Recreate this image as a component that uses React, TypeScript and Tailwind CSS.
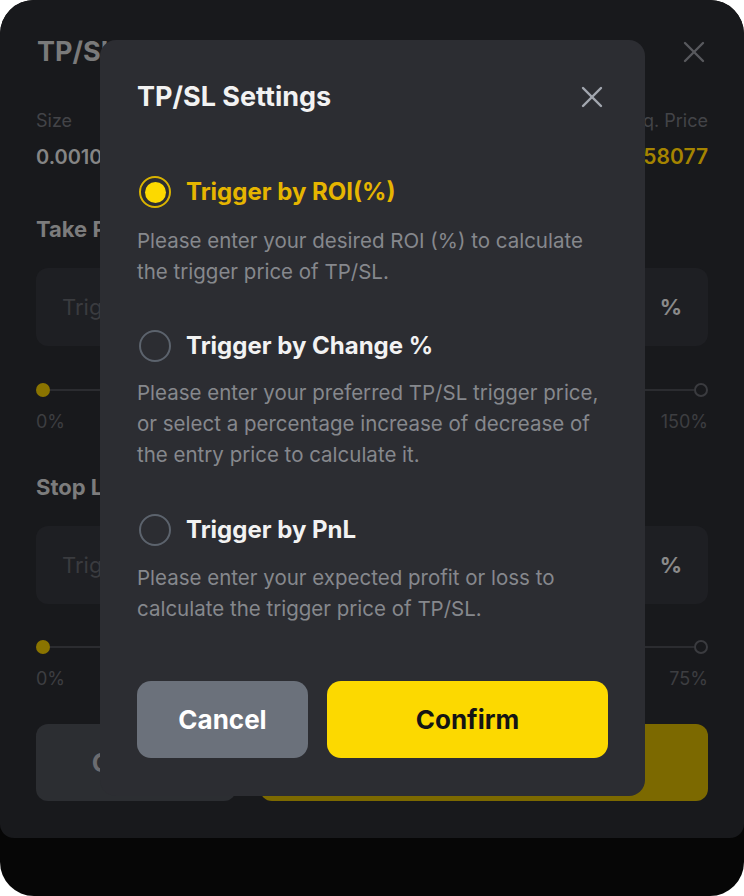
import { X } from 'lucide-react';

const font = { fontFamily: 'Inter, "Noto Sans", sans-serif' };

function Slider({ max }: { max: string }) {
  return (
    <div>
      <div className="flex items-center h-[14px]">
        <div className="w-[14px] h-[14px] rounded-full bg-[#8a7400]" />
        <div className="flex-1 h-[2px] bg-[#2b2c30]" />
        <div className="w-[14px] h-[14px] rounded-full border-2 border-[#3a3b3f]" />
      </div>
      <div className="flex justify-between mt-[15px] text-[18px] leading-[20px] text-[#3d3e41]">
        <span>0%</span>
        <span>{max}</span>
      </div>
    </div>
  );
}

function PriceInput() {
  return (
    <div className="h-[78px] rounded-[12px] bg-[#1e1f23] flex items-center justify-between pl-[26px] pr-[26px]">
      <span className="text-[22px] text-[#3a3b3f]">Trig</span>
      <span className="text-[22px] font-bold text-[#8a8a8a]">%</span>
    </div>
  );
}

function Option({
  selected,
  label,
  desc,
  className,
  descClass,
}: {
  selected?: boolean;
  label: string;
  desc: string;
  className: string;
  descClass: string;
}) {
  return (
    <div className={className}>
      <div className="flex items-center h-[32px] gap-[15px]">
        {selected ? (
          <div className="ml-[2px] w-[32px] h-[32px] rounded-full border-2 border-[#d9b300] flex items-center justify-center">
            <div className="w-[21px] h-[21px] rounded-full bg-[#fcd900]" />
          </div>
        ) : (
          <div className="ml-[2px] w-[32px] h-[32px] rounded-full border-2 border-[#5c636d]" />
        )}
        <span
          className={`text-[24px] font-bold ${selected ? 'text-[#e6b500]' : 'text-[#f2f2f2]'}`}
        >
          {label}
        </span>
      </div>
      <p className={`${descClass} text-[20.5px] leading-[31px] text-[#86888d]`}>{desc}</p>
    </div>
  );
}

export default function App() {
  return (
    <div className="w-[744px] h-[896px] bg-white" style={font}>
      <div className="relative w-full h-full rounded-[34px] bg-[#060606] overflow-hidden">
        {/* dimmed sheet behind the dialog */}
        <div className="h-[838px] bg-[#18191c] rounded-b-[14px] px-[36px] pt-[30px]">
          <div className="flex items-center justify-between h-[44px]">
            <span className="text-[27px] font-bold text-[#7a7a7a] pl-px">TP/SL</span>
            <X className="w-[36px] h-[36px] text-[#58595d] -mr-[4px]" strokeWidth={1.6} />
          </div>
          <div className="mt-[37px] flex justify-between">
            <div>
              <div className="text-[18px] leading-[20px] text-[#434448]">Size</div>
              <div className="mt-[14px] text-[20px] leading-[24px] font-semibold text-[#858585]">
                0.0010 BTC
              </div>
            </div>
            <div className="text-right">
              <div className="text-[18px] leading-[20px] text-[#434448]">Est. Liq. Price</div>
              <div className="mt-[14px] text-[21px] leading-[24px] font-semibold text-[#a58400]">
                58077
              </div>
            </div>
          </div>
          <div className="mt-[46px] text-[22px] leading-[28px] font-bold text-[#7c7c7c]">
            Take Profit
          </div>
          <div className="mt-[25px]">
            <PriceInput />
          </div>
          <div className="mt-[37px]">
            <Slider max="150%" />
          </div>
          <div className="mt-[41px] text-[22px] leading-[28px] font-bold text-[#7c7c7c]">
            Stop Loss
          </div>
          <div className="mt-[25px]">
            <PriceInput />
          </div>
          <div className="mt-[36px]">
            <Slider max="75%" />
          </div>
          <div className="mt-[35px] flex gap-[24px] h-[77px]">
            <div className="w-[200px] rounded-[12px] bg-[#2c2e32] flex items-center justify-center text-[26px] font-bold text-[#6b6c70]">
              Cancel
            </div>
            <div className="flex-1 rounded-[12px] bg-[#7c6900]" />
          </div>
        </div>

        {/* dialog */}
        <div className="absolute left-[100px] top-[40px] w-[545px] h-[756px] rounded-[16px] bg-[#2c2d32] pl-[37px] pr-[37px] pt-[41px]">
          <div className="flex items-center justify-between h-[32px]">
            <span className="text-[27px] font-bold text-[#f2f2f2]">TP/SL Settings</span>
            <X className="w-[36px] h-[36px] text-[#a3a7b0] -mr-[2px]" strokeWidth={1.6} />
          </div>
          <Option
            className="mt-[63px]"
            descClass="mt-[17px]"
            selected
            label="Trigger by ROI(%)"
            desc="Please enter your desired ROI (%) to calculate the trigger price of TP/SL."
          />
          <Option
            className="mt-[43px]"
            descClass="mt-[15px]"
            label="Trigger by Change %"
            desc="Please enter your preferred TP/SL trigger price, or select a percentage increase of decrease of the entry price to calculate it."
          />
          <Option
            className="mt-[44px]"
            descClass="mt-[16px]"
            label="Trigger by PnL"
            desc="Please enter your expected profit or loss to calculate the trigger price of TP/SL."
          />
          <div className="mt-[57px] flex gap-[19px] h-[77px]">
            <button className="w-[171px] rounded-[14px] bg-[#6b717b] text-[26px] font-bold text-white">
              Cancel
            </button>
            <button className="flex-1 rounded-[14px] bg-[#fcd900] text-[26px] font-bold text-[#141414]">
              Confirm
            </button>
          </div>
        </div>
      </div>
    </div>
  );
}
